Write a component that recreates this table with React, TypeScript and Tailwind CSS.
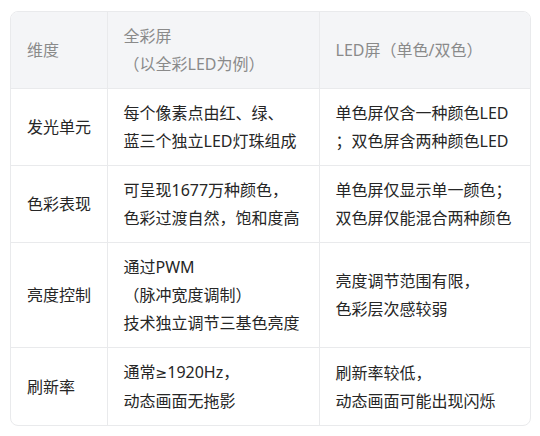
import React from "react";

type Row = { label: string; a: React.ReactNode[]; b: string[] };

const rows: Row[] = [
  {
    label: "发光单元",
    a: ["每个像素点由红、绿、", "蓝三个独立LED灯珠组成"],
    b: ["单色屏仅含一种颜色LED", "；双色屏含两种颜色LED"],
  },
  {
    label: "色彩表现",
    a: ["可呈现1677万种颜色，", "色彩过渡自然，饱和度高"],
    b: ["单色屏仅显示单一颜色；", "双色屏仅能混合两种颜色"],
  },
  {
    label: "亮度控制",
    a: ["通过PWM", "（脉冲宽度调制）", "技术独立调节三基色亮度"],
    b: ["亮度调节范围有限，", "色彩层次感较弱"],
  },
  {
    label: "刷新率",
    a: [
      <>
        通常
        <span style={{ fontFamily: '"DejaVu Sans", sans-serif' }} className="text-[14px]">
          ≥
        </span>
        1920Hz，
      </>,
      "动态画面无拖影",
    ],
    b: ["刷新率较低，", "动态画面可能出现闪烁"],
  },
];

function Lines({ lines }: { lines: React.ReactNode[] }) {
  return (
    <>
      {lines.map((l, i) => (
        <div key={i} className="whitespace-nowrap">
          {l}
        </div>
      ))}
    </>
  );
}

export default function App() {
  return (
    <div
      className="w-[540px] h-[436px] bg-white pl-[10px] pt-[11px]"
      style={{ fontFamily: '"Noto Sans", "Noto Sans CJK SC", sans-serif' }}
    >
      <div className="w-[521px] rounded-lg border border-[#e9eaec] overflow-hidden text-[16px] leading-[28px]">
        <table className="w-full border-collapse table-fixed">
          <colgroup>
            <col className="w-[96px]" />
            <col className="w-[212px]" />
            <col className="w-[211px]" />
          </colgroup>
          <thead>
            <tr className="bg-[#f4f5f7] text-[#8a8a8a]">
              <th className="font-normal text-left align-middle px-4 py-[10px] whitespace-nowrap border-r border-b border-[#e9eaec]">
                维度
              </th>
              <th className="font-normal text-left align-middle px-4 py-[10px] border-r border-b border-[#e9eaec]">
                <Lines lines={["全彩屏", "（以全彩LED为例）"]} />
              </th>
              <th className="font-normal text-left align-middle px-4 py-[10px] whitespace-nowrap border-b border-[#e9eaec]">
                LED屏（单色/双色）
              </th>
            </tr>
          </thead>
          <tbody className="text-[#262626]">
            {rows.map((r, i) => {
              const last = i === rows.length - 1;
              const bb = last ? "" : "border-b";
              return (
                <tr key={i}>
                  <td className={`align-middle pl-4 pr-0 py-[10px] whitespace-nowrap border-r border-[#e9eaec] ${bb}`}>
                    {r.label}
                  </td>
                  <td className={`align-middle px-4 py-[10px] border-r border-[#e9eaec] ${bb}`}>
                    <Lines lines={r.a} />
                  </td>
                  <td className={`align-middle px-4 py-[10px] border-[#e9eaec] ${bb}`}>
                    <Lines lines={r.b} />
                  </td>
                </tr>
              );
            })}
          </tbody>
        </table>
      </div>
    </div>
  );
}
